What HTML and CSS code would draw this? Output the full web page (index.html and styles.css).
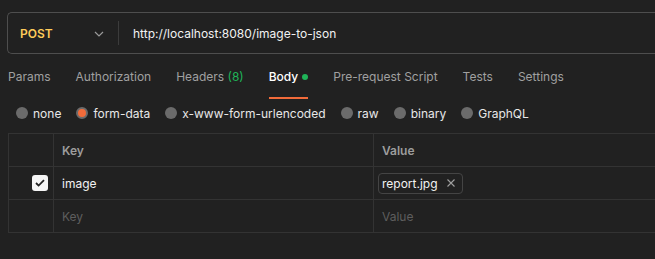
FILE: index.html
```html
<!DOCTYPE html>
<html lang="en">
<head>
  <meta charset="UTF-8" />
  <title>POST image-to-json</title>
  <link rel="stylesheet" href="styles.css">
</head>
<body>

  <div class="url-bar">
    <div class="method">
      <span class="method-name">POST</span>
      <svg class="chevron" width="10" height="6" viewBox="0 0 10 6"><path d="M1 1l4 4 4-4" fill="none" stroke="#9a9a9a" stroke-width="1.2"/></svg>
    </div>
    <div class="divider"></div>
    <div class="url">http://localhost:8080/image-to-json</div>
  </div>

  <div class="tabs">
    <span class="tab">Params</span>
    <span class="tab">Authorization</span>
    <span class="tab">Headers <span class="count">(8)</span></span>
    <span class="tab active">Body<span class="dot"></span></span>
    <span class="tab">Pre-request Script</span>
    <span class="tab">Tests</span>
    <span class="tab">Settings</span>
  </div>

  <div class="body-types">
    <label class="radio"><span class="circle"></span>none</label>
    <label class="radio"><span class="circle checked"></span>form-data</label>
    <label class="radio"><span class="circle"></span>x-www-form-urlencoded</label>
    <label class="radio"><span class="circle"></span>raw</label>
    <label class="radio"><span class="circle"></span>binary</label>
    <label class="radio"><span class="circle"></span>GraphQL</label>
  </div>

  <table class="params">
    <tr class="head">
      <td class="check-cell"></td>
      <td class="key-cell">Key</td>
      <td class="value-cell">Value</td>
    </tr>
    <tr>
      <td class="check-cell">
        <span class="checkbox">
          <svg width="10" height="8" viewBox="0 0 10 8"><path d="M1 4l2.6 2.6L9 1.2" fill="none" stroke="#222" stroke-width="1.8"/></svg>
        </span>
      </td>
      <td class="key-cell filled">image</td>
      <td class="value-cell">
        <span class="file-chip">report.jpg
          <svg width="8" height="8" viewBox="0 0 8 8"><path d="M0.5 0.5l7 7M7.5 0.5l-7 7" stroke="#a0a0a0" stroke-width="1.1"/></svg>
        </span>
      </td>
    </tr>
    <tr class="empty">
      <td class="check-cell"></td>
      <td class="key-cell">Key</td>
      <td class="value-cell">Value</td>
    </tr>
  </table>

</body>
</html>
```

FILE: styles.css
```css
html, body {
  margin: 0;
  padding: 0;
  height: 100%;
  background-color: #212121;
  font-family: 'Inter', 'Noto Sans', sans-serif;
  font-size: 12px;
  color: #e8e8e8;
  overflow: hidden;
}

.url-bar {
  display: flex;
  align-items: center;
  box-sizing: border-box;
  height: 42px;
  width: calc(100% - 7px);
  margin: 12px 0 0 7px;
  border: 1px solid #4e4e4e;
  border-right: none;
  border-radius: 5px 0 0 5px;
}

.method {
  display: flex;
  align-items: center;
  justify-content: space-between;
  padding: 0 14px 0 12px;
  box-sizing: border-box;
  width: 110px;
}

.method-name {
  color: #ffcb5a;
  font-weight: 600;
}

.chevron {
  margin-top: 1px;
}

.divider {
  width: 1px;
  height: 24px;
  background-color: #3c3c3c;
}

.url {
  padding-left: 14px;
  color: #f2f2f2;
}

.tabs {
  display: flex;
  gap: 25px;
  padding: 0 0 0 8px;
  margin-top: 13px;
  height: 27px;
}

.tab {
  color: #a0a0a0;
  line-height: 20px;
  position: relative;
  white-space: nowrap;
}

.tab .count {
  color: #1fb458;
}

.tab.active {
  color: #ffffff;
  font-weight: 500;
}

.tab.active::after {
  content: "";
  position: absolute;
  left: 0;
  right: 0;
  bottom: -5px;
  height: 2px;
  background-color: #f26b3a;
}

.dot {
  display: inline-block;
  width: 6px;
  height: 6px;
  border-radius: 50%;
  background-color: #1fb458;
  margin-left: 4px;
  vertical-align: 1px;
}

.body-types {
  display: flex;
  gap: 15px;
  padding-left: 16px;
  margin-top: 9px;
  height: 20px;
  align-items: center;
}

.radio {
  display: flex;
  align-items: center;
  gap: 5px;
  color: #e8e8e8;
}

.circle {
  width: 12px;
  height: 12px;
  border-radius: 50%;
  background-color: #6b6b6b;
  box-sizing: border-box;
}

.circle.checked {
  background-color: #f26b3a;
  border: 2px solid #6b6b6b;
}

.params {
  margin: 10px 0 0 8px;
  border-collapse: collapse;
  width: calc(100% - 8px);
}

.params td {
  border: 1px solid #333;
  height: 33px;
  padding: 0 8px;
  box-sizing: border-box;
}

.params .value-cell {
  border-right: none;
}

.params .check-cell {
  width: 45px;
  text-align: right;
  padding-right: 5px;
}

.params .key-cell {
  width: 320px;
}

.head td {
  color: #9d9d9d;
  font-weight: 600;
}

.filled {
  color: #f2f2f2;
}

.empty td {
  color: #5e5e5e;
}

.checkbox {
  display: inline-flex;
  align-items: center;
  justify-content: center;
  width: 16px;
  height: 16px;
  border-radius: 3px;
  background-color: #f5f5f5;
  vertical-align: middle;
}

.file-chip {
  display: inline-flex;
  align-items: center;
  gap: 9px;
  height: 19px;
  padding: 0 7px 0 3px;
  border: 1px solid #444;
  border-radius: 4px;
  color: #f2f2f2;
  margin-left: -4px;
}
```
